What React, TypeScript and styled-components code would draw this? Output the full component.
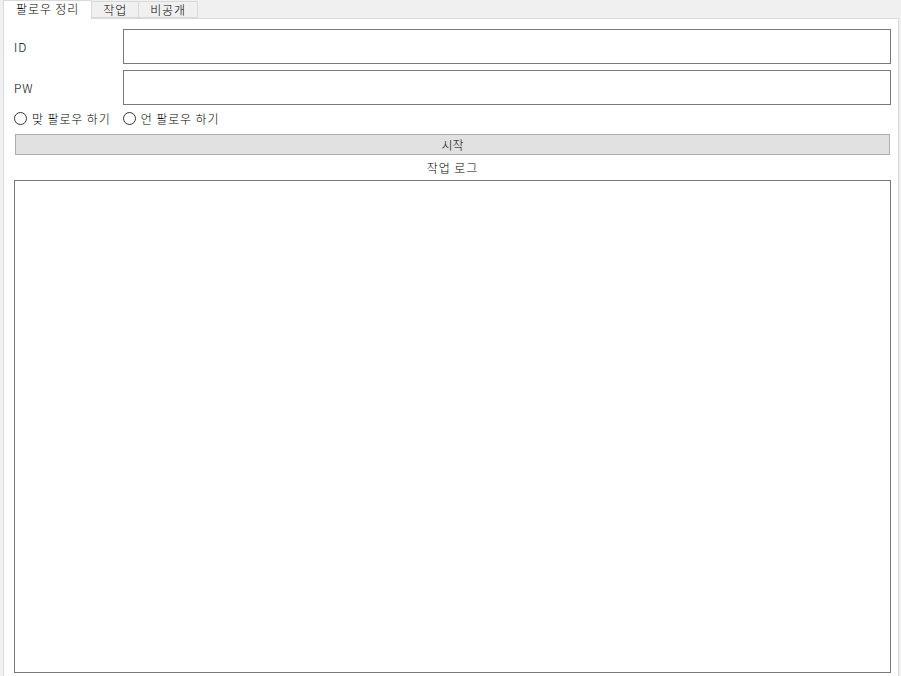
import React, { useState } from 'react';
import styled, { createGlobalStyle } from 'styled-components';

const GlobalStyle = createGlobalStyle`
    html, body {
        margin: 0;
        padding: 0;
        background: #f0f0f0;
        font-family: "Noto Sans CJK KR", "Noto Sans", sans-serif;
        font-size: 12px;
        font-weight: 300;
        letter-spacing: 0.9px;
        color: #000;
        overflow: hidden;
    }
`;

const tabs = ['팔로우 정리', '작업', '비공개'];

export default function App() {
    const [active, setActive] = useState(0);
    const [mode, setMode] = useState<'mutual' | 'unfollow' | null>(null);

    return (
        <Window>
            <GlobalStyle />
            <TabBar>
                {tabs.map((t, i) => (
                    <Tab key={t} $active={i === active} onClick={() => setActive(i)}>
                        {t}
                    </Tab>
                ))}
            </TabBar>
            <Panel>
                <FieldRow>
                    <Label>ID</Label>
                    <TextBox />
                </FieldRow>
                <FieldRow>
                    <Label>PW</Label>
                    <TextBox type="password" />
                </FieldRow>
                <RadioRow>
                    <RadioItem onClick={() => setMode('mutual')}>
                        <Circle $checked={mode === 'mutual'} />
                        맞 팔로우 하기
                    </RadioItem>
                    <RadioItem onClick={() => setMode('unfollow')}>
                        <Circle $checked={mode === 'unfollow'} />
                        언 팔로우 하기
                    </RadioItem>
                </RadioRow>
                <StartButton>시작</StartButton>
                <LogTitle>작업 로그</LogTitle>
                <LogBox readOnly />
            </Panel>
        </Window>
    );
}

const Window = styled.div`
    width: 901px;
    height: 680px;
    display: flex;
    flex-direction: column;
`;

const TabBar = styled.div`
    display: flex;
    align-items: flex-end;
    height: 18px;
    padding-left: 3px;
`;

const Tab = styled.div<{ $active: boolean }>`
    box-sizing: border-box;
    height: ${p => (p.$active ? '19px' : '17px')};
    margin-bottom: ${p => (p.$active ? '-1px' : '0')};
    padding: ${p => (p.$active ? '0 12px' : '0 11px')};
    background: ${p => (p.$active ? '#fff' : '#f0f0f0')};
    border: 1px solid #d9d9d9;
    border-bottom: ${p => (p.$active ? 'none' : '1px solid #d9d9d9')};
    border-left: ${p => (p.$active ? '1px solid #d9d9d9' : 'none')};
    line-height: ${p => (p.$active ? '16px' : '15px')};
    white-space: nowrap;
    position: relative;
    z-index: ${p => (p.$active ? 1 : 0)};
    cursor: default;
`;

const Panel = styled.div`
    flex: 1;
    display: flex;
    flex-direction: column;
    margin: 0 2px 0 3px;
    padding: 10px 7px 2px 10px;
    background: #fff;
    border: 1px solid #d9d9d9;
    min-height: 0;
`;

const FieldRow = styled.div`
    display: flex;
    align-items: center;
    height: 35px;
    margin-bottom: 6px;
`;

const Label = styled.span`
    width: 109px;
`;

const TextBox = styled.input`
    flex: 1;
    box-sizing: border-box;
    height: 35px;
    border: 1px solid #7a7a7a;
    outline: none;
    font: inherit;
    padding: 0 4px;
`;

const RadioRow = styled.div`
    display: flex;
    align-items: center;
    gap: 12px;
    height: 16px;
    margin-top: -1px;
`;

const RadioItem = styled.label`
    display: flex;
    align-items: center;
    gap: 5px;
    cursor: default;
    white-space: nowrap;
`;

const Circle = styled.span<{ $checked: boolean }>`
    box-sizing: border-box;
    width: 13px;
    height: 13px;
    border-radius: 50%;
    border: 1px solid #333;
    background: ${p => (p.$checked ? 'radial-gradient(circle, #333 0 3px, #fff 3.5px)' : '#fff')};
`;

const StartButton = styled.button`
    box-sizing: border-box;
    height: 21px;
    margin: 8px 1px 0 1px;
    background: #e1e1e1;
    border: 1px solid #adadad;
    font: inherit;
    padding: 0;
    line-height: 18px;
    color: #000;
`;

const LogTitle = styled.div`
    text-align: center;
    height: 25px;
    line-height: 25px;
`;

const LogBox = styled.textarea`
    flex: 1;
    box-sizing: border-box;
    resize: none;
    border: 1px solid #7a7a7a;
    outline: none;
    font: inherit;
    margin-bottom: 4px;
`;
